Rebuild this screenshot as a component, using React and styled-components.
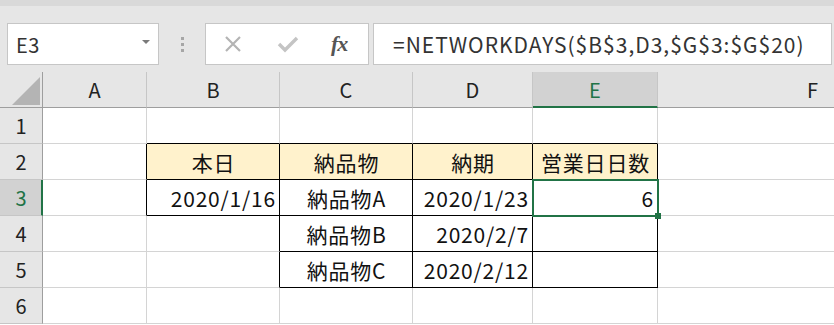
import React from "react";
import styled, { createGlobalStyle } from "styled-components";

const GlobalStyle = createGlobalStyle`
  html, body {
    margin: 0;
    padding: 0;
    background: #ffffff;
  }
  body {
    font-family: "Noto Sans CJK JP", "Noto Sans", sans-serif;
  }
`;

const GREEN = "#217346";
const GRID = "#d4d4d4";

const Page = styled.div`
  width: 834px;
  height: 325px;
  overflow: hidden;
  background: #ffffff;
`;

const Toolbar = styled.div`
  display: flex;
  align-items: center;
  height: 72px;
  box-sizing: border-box;
  padding: 10px 0 0 7px;
  background: #e6e6e6;
  border-top: 6px solid #d9d9d9;
`;

const NameBox = styled.div`
  width: 152px;
  height: 42px;
  box-sizing: border-box;
  background: #fff;
  border: 1px solid #c6c6c6;
  display: flex;
  align-items: center;
  justify-content: space-between;
  padding: 0 8px 0 8px;
  font-size: 20px;
  letter-spacing: 0.5px;
  color: #333;
`;

const DropArrow = styled.span`
  width: 0;
  height: 0;
  border-left: 4px solid transparent;
  border-right: 4px solid transparent;
  border-top: 4px solid #7a7a7a;
  margin-top: -4px;
`;

const Grip = styled.div`
  width: 46px;
  display: flex;
  flex-direction: column;
  align-items: center;
  gap: 3px;
  span {
    width: 3px;
    height: 3px;
    background: #a6a6a6;
  }
`;

const ButtonBox = styled.div`
  width: 164px;
  height: 42px;
  box-sizing: border-box;
  background: #fff;
  border: 1px solid #c6c6c6;
  display: flex;
  align-items: center;
  padding-left: 17px;
  gap: 34px;
`;

const Fx = styled.span`
  font-family: "Liberation Serif", "DejaVu Serif", serif;
  font-style: italic;
  font-weight: bold;
  font-size: 22px;
  color: #555;
  letter-spacing: -1px;
  margin-left: -2px;
`;

const FormulaBox = styled.div`
  width: 459px;
  height: 42px;
  margin-left: 4px;
  box-sizing: border-box;
  background: #fff;
  border: 1px solid #c6c6c6;
  display: flex;
  align-items: center;
  padding-left: 19px;
  font-size: 21px;
  letter-spacing: 1px;
  color: #333;
  white-space: nowrap;
`;

const Sheet = styled.div`
  display: grid;
  grid-template-columns: 43px 104px 133px 133px 120px 125px 310px;
  grid-auto-rows: 36px;
  width: 834px;
  overflow: hidden;
`;

const Corner = styled.div`
  background: #e6e6e6;
  border-right: 1px solid #9e9e9e;
  border-bottom: 1px solid #9e9e9e;
  display: flex;
  align-items: flex-end;
  justify-content: flex-end;
  padding: 0 2px 2px 0;
`;

const ColHead = styled.div`
  box-sizing: border-box;
  background: ${(p) => (p.$active ? "#d2d2d2" : "#e6e6e6")};
  border-right: 1px solid #c6c6c6;
  border-bottom: ${(p) => (p.$active ? `2px solid ${GREEN}` : "1px solid #9e9e9e")};
  color: ${(p) => (p.$active ? GREEN : "#222")};
  font-size: 20px;
  display: flex;
  align-items: center;
  justify-content: center;
  padding-top: ${(p) => (p.$active ? "1px" : "0")};
`;

const RowHead = styled.div`
  box-sizing: border-box;
  background: ${(p) => (p.$active ? "#d2d2d2" : "#e6e6e6")};
  border-right: ${(p) => (p.$active ? `2px solid ${GREEN}` : "1px solid #9e9e9e")};
  border-bottom: 1px solid #c6c6c6;
  color: ${(p) => (p.$active ? GREEN : "#222")};
  font-size: 20px;
  display: flex;
  align-items: center;
  justify-content: center;
  padding-left: ${(p) => (p.$active ? "1px" : "0")};
`;

const Cell = styled.div`
  position: relative;
  box-sizing: border-box;
  background: ${(p) => p.$bg || "#fff"};
  border-right: 1px solid ${(p) => p.$rc};
  border-bottom: 1px solid ${(p) => p.$bc};
  font-size: 21px;
  letter-spacing: 0.8px;
  color: #111;
  display: flex;
  align-items: center;
  justify-content: ${(p) =>
    p.$align === "right" ? "flex-end" : p.$align === "center" ? "center" : "flex-start"};
  padding: 0 3px 0 4px;
  white-space: nowrap;
`;

const Selection = styled.div`
  position: absolute;
  z-index: 2;
  top: -1px;
  left: -1px;
  right: -2px;
  bottom: -2px;
  border: 2px solid ${GREEN};
  pointer-events: none;
`;

const FillHandle = styled.div`
  position: absolute;
  right: -4px;
  bottom: -4px;
  width: 6px;
  height: 6px;
  background: ${GREEN};
`;

const cols = ["A", "B", "C", "D", "E", "F"];

const data = {
  2: {
    B: { v: "本日", a: "center" },
    C: { v: "納品物", a: "center" },
    D: { v: "納期", a: "center" },
    E: { v: "営業日日数", a: "center" },
  },
  3: {
    B: { v: "2020/1/16", a: "right" },
    C: { v: "納品物A", a: "center" },
    D: { v: "2020/1/23", a: "right" },
    E: { v: "6", a: "right" },
  },
  4: {
    C: { v: "納品物B", a: "center" },
    D: { v: "2020/2/7", a: "right" },
  },
  5: {
    C: { v: "納品物C", a: "center" },
    D: { v: "2020/2/12", a: "right" },
  },
};

const bordered = (r, c) => {
  const ci = cols.indexOf(c);
  if (r >= 2 && r <= 3 && ci >= 1 && ci <= 4) return true;
  if (r >= 4 && r <= 5 && ci >= 2 && ci <= 4) return true;
  return false;
};

function SheetCells() {
  const rows = [1, 2, 3, 4, 5, 6];
  return rows.map((r) => (
    <React.Fragment key={r}>
      <RowHead $active={r === 3}>{r}</RowHead>
      {cols.map((c, i) => {
        const cell = (data[r] && data[r][c]) || {};
        const right = cols[i + 1];
        const rc = bordered(r, c) || (right && bordered(r, right)) ? "#000" : GRID;
        const bc = bordered(r, c) || bordered(r + 1, c) ? "#000" : GRID;
        const active = r === 3 && c === "E";
        return (
          <Cell
            key={c}
            $rc={rc}
            $bc={bc}
            $align={cell.a}
            $bg={r === 2 && bordered(r, c) ? "#fff2cc" : undefined}
          >
            {cell.v}
            {active && (
              <Selection>
                <FillHandle />
              </Selection>
            )}
          </Cell>
        );
      })}
    </React.Fragment>
  ));
}

export default function App() {
  return (
    <Page>
      <GlobalStyle />
      <Toolbar>
        <NameBox>
          E3
          <DropArrow />
        </NameBox>
        <Grip>
          <span />
          <span />
          <span />
        </Grip>
        <ButtonBox>
          <svg width="20" height="20" viewBox="0 0 20 20">
            <path d="M3 3 L17 17 M17 3 L3 17" stroke="#b4b4b4" strokeWidth="2.2" fill="none" />
          </svg>
          <svg width="22" height="20" viewBox="0 0 22 20">
            <path d="M2 10 L8 16 L20 4" stroke="#c4c4c4" strokeWidth="3.4" fill="none" />
          </svg>
          <Fx>fx</Fx>
        </ButtonBox>
        <FormulaBox>=NETWORKDAYS($B$3,D3,$G$3:$G$20)</FormulaBox>
      </Toolbar>
      <Sheet>
        <Corner>
          <svg width="28" height="28" viewBox="0 0 28 28">
            <polygon points="0,28 28,28 28,0" fill="#b4b4b4" />
          </svg>
        </Corner>
        {cols.map((c) => (
          <ColHead key={c} $active={c === "E"}>
            {c}
          </ColHead>
        ))}
        <SheetCells />
      </Sheet>
    </Page>
  );
}
